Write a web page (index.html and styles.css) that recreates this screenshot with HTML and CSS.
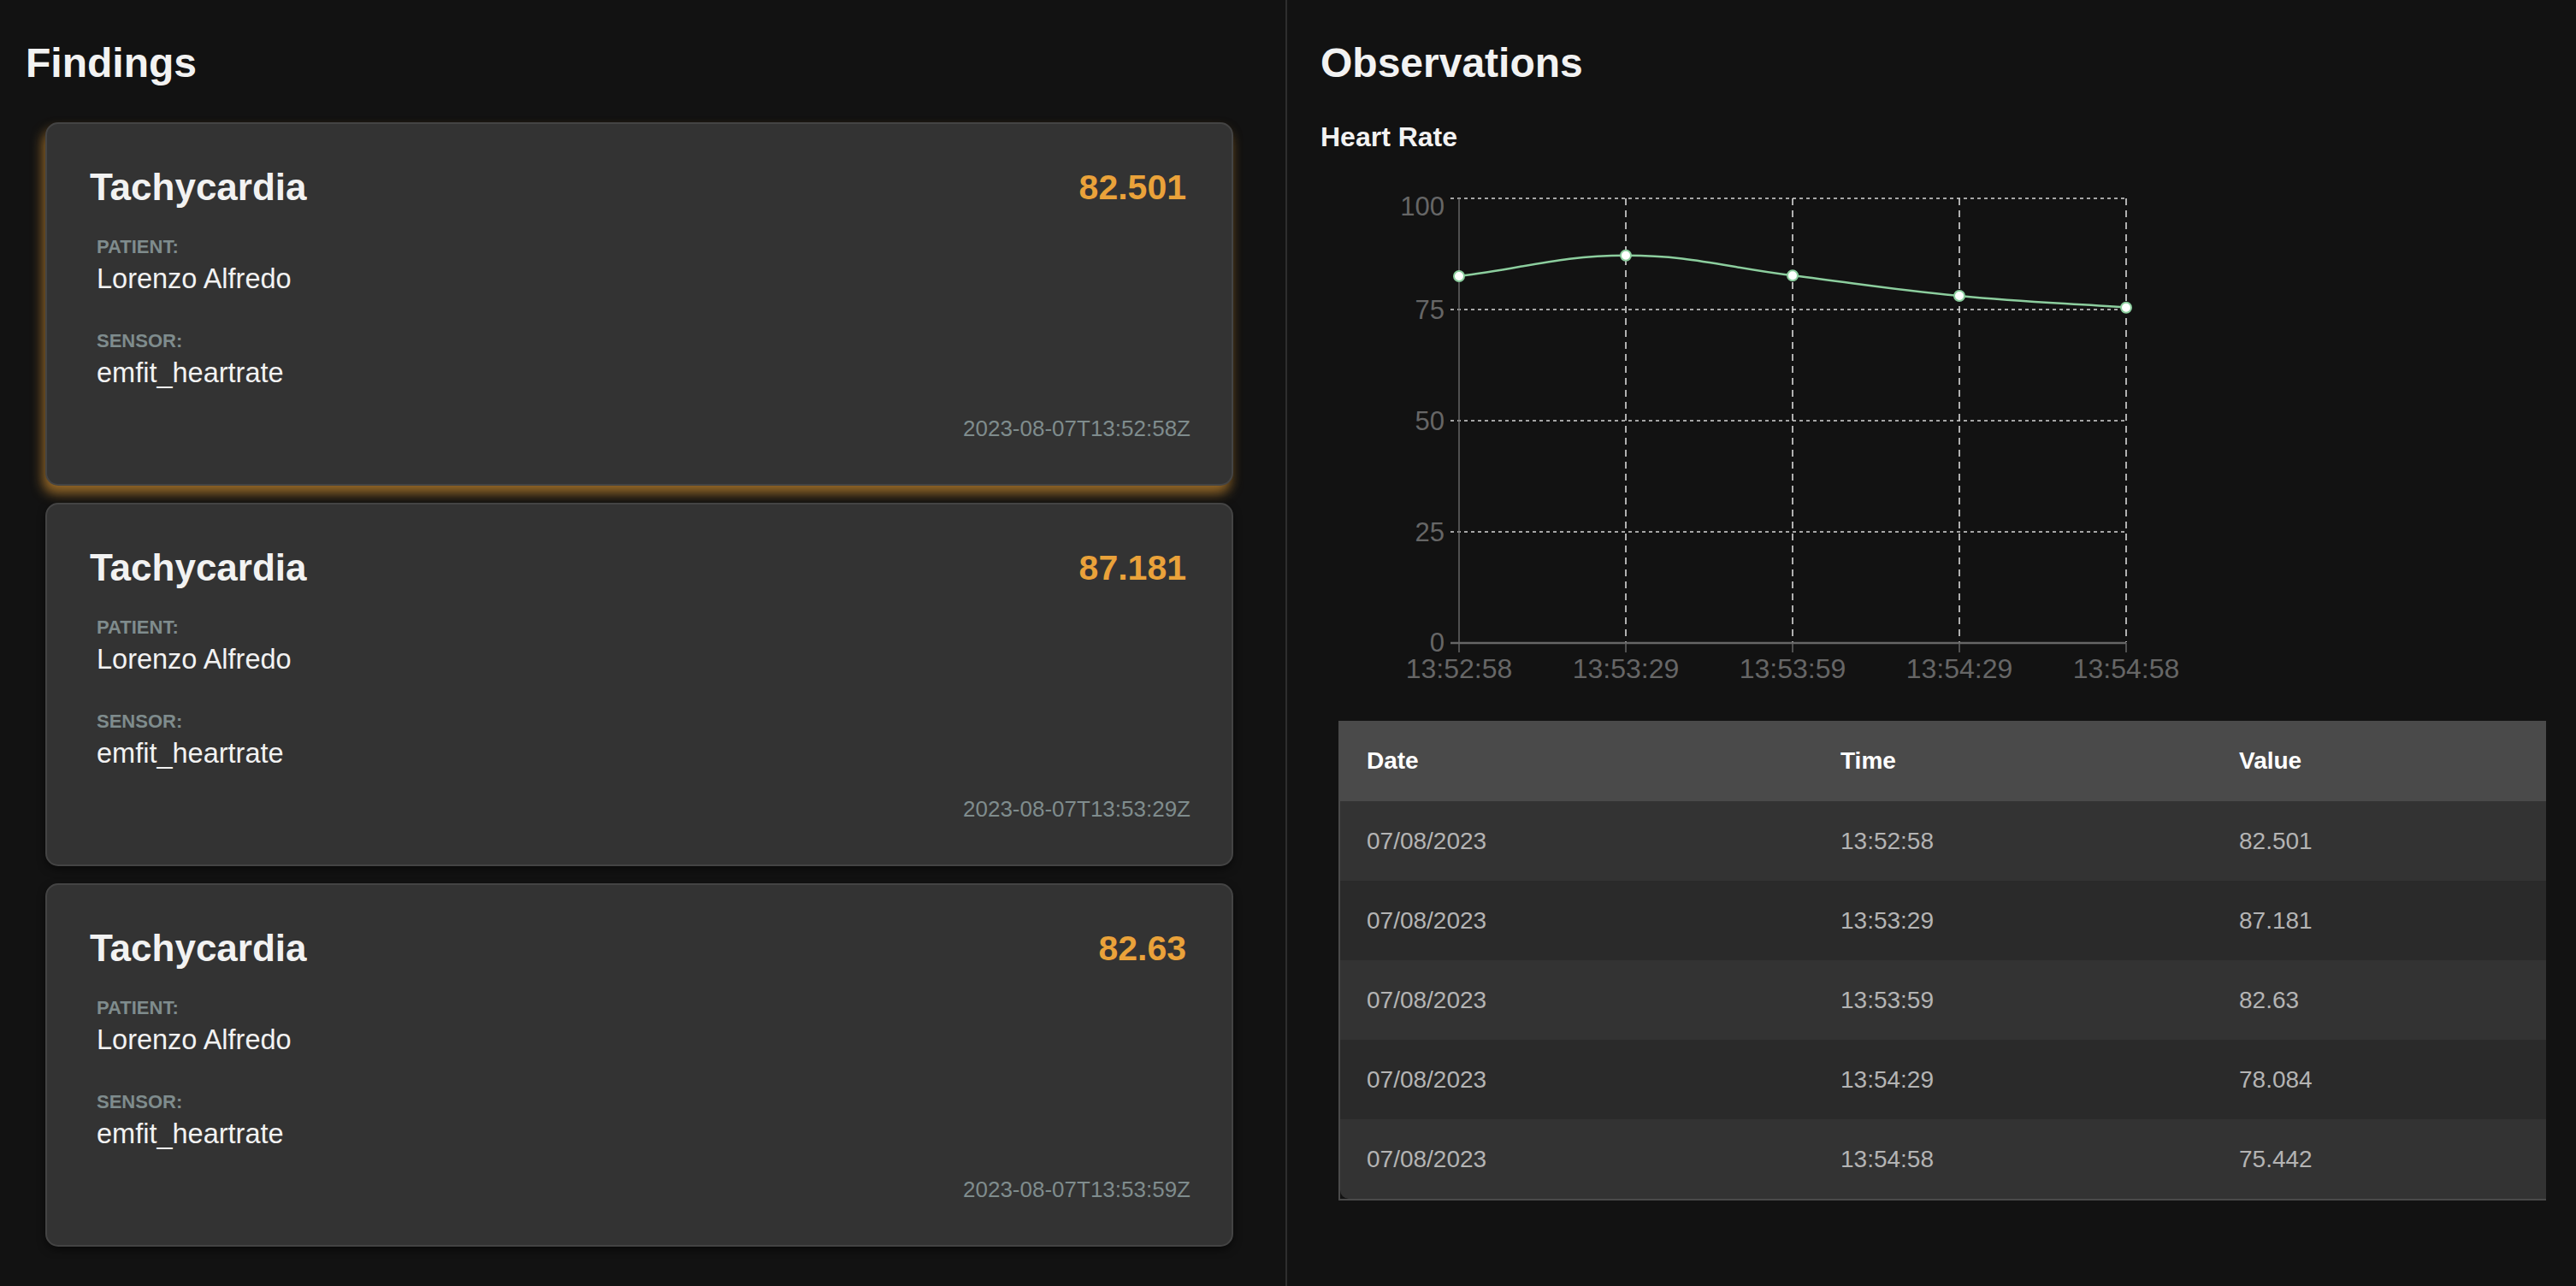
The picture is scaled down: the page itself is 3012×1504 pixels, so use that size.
FILE: index.html
```html
<!DOCTYPE html>
<html lang="en">
<head>
<meta charset="utf-8">
<title>Findings &amp; Observations</title>
<link rel="stylesheet" href="styles.css">
</head>
<body>
<div class="layout">
  <section class="panel panel-findings">
    <h1 class="panel-title">Findings</h1>
    <div class="card-list">
      <article class="card card-active">
        <div class="card-head">
          <h2 class="card-title">Tachycardia</h2>
          <span class="card-value">82.501</span>
        </div>
        <div class="card-info">
          <div class="info-label">Patient:</div>
          <div class="info-value">Lorenzo Alfredo</div>
          <div class="info-label info-label-next">Sensor:</div>
          <div class="info-value">emfit_heartrate</div>
        </div>
        <div class="card-time">2023-08-07T13:52:58Z</div>
      </article>
      <article class="card">
        <div class="card-head">
          <h2 class="card-title">Tachycardia</h2>
          <span class="card-value">87.181</span>
        </div>
        <div class="card-info">
          <div class="info-label">Patient:</div>
          <div class="info-value">Lorenzo Alfredo</div>
          <div class="info-label info-label-next">Sensor:</div>
          <div class="info-value">emfit_heartrate</div>
        </div>
        <div class="card-time">2023-08-07T13:53:29Z</div>
      </article>
      <article class="card">
        <div class="card-head">
          <h2 class="card-title">Tachycardia</h2>
          <span class="card-value">82.63</span>
        </div>
        <div class="card-info">
          <div class="info-label">Patient:</div>
          <div class="info-value">Lorenzo Alfredo</div>
          <div class="info-label info-label-next">Sensor:</div>
          <div class="info-value">emfit_heartrate</div>
        </div>
        <div class="card-time">2023-08-07T13:53:59Z</div>
      </article>
    </div>
  </section>

  <section class="panel panel-observations">
    <h1 class="panel-title">Observations</h1>
    <h3 class="chart-title">Heart Rate</h3>
    <div class="chart-wrap">
      <svg class="chart" width="960" height="600" viewBox="0 0 960 600" xmlns="http://www.w3.org/2000/svg">
        <g class="grid-h" stroke="#d8d8d8" stroke-width="1.6" stroke-dasharray="4 4" fill="none">
          <line x1="95" y1="22" x2="885" y2="22"/>
          <line x1="95" y1="152" x2="885" y2="152"/>
          <line x1="95" y1="282" x2="885" y2="282"/>
          <line x1="95" y1="412" x2="885" y2="412"/>
        </g>
        <g class="grid-v" stroke="#d8d8d8" stroke-width="1.6" stroke-dasharray="8 6" fill="none">
          <line x1="300" y1="22" x2="300" y2="541"/>
          <line x1="495" y1="22" x2="495" y2="541"/>
          <line x1="690" y1="22" x2="690" y2="541"/>
          <line x1="885" y1="22" x2="885" y2="541"/>
        </g>
        <g class="axes" stroke="#666" fill="none">
          <line x1="105" y1="22" x2="105" y2="553" stroke-width="1.5"/>
          <line x1="95" y1="542" x2="885" y2="542" stroke-width="2.5"/>
          <line x1="300" y1="542" x2="300" y2="553" stroke-width="1.5"/>
          <line x1="495" y1="542" x2="495" y2="553" stroke-width="1.5"/>
          <line x1="690" y1="542" x2="690" y2="553" stroke-width="1.5"/>
          <line x1="885" y1="542" x2="885" y2="553" stroke-width="1.5"/>
        </g>
        <g class="tick-labels" fill="#666" font-family="'Liberation Sans', Arial, sans-serif" font-size="31">
          <text x="88" y="42" text-anchor="end">100</text>
          <text x="88" y="163" text-anchor="end">75</text>
          <text x="88" y="293" text-anchor="end">50</text>
          <text x="88" y="423" text-anchor="end">25</text>
          <text x="88" y="552" text-anchor="end">0</text>
        </g>
        <g class="tick-labels" fill="#666" font-family="'Liberation Sans', Arial, sans-serif" font-size="32">
          <text x="105" y="583" text-anchor="middle">13:52:58</text>
          <text x="300" y="583" text-anchor="middle">13:53:29</text>
          <text x="495" y="583" text-anchor="middle">13:53:59</text>
          <text x="690" y="583" text-anchor="middle">13:54:29</text>
          <text x="885" y="583" text-anchor="middle">13:54:58</text>
        </g>
        <path d="M105,113 C183,103.3 222,88.8 300,88.7 C378,88.6 417,102.8 495,112.3 C573,121.8 612,128.5 690,136 C768,143.5 807,144.2 885,149.7" fill="none" stroke="#8cce9e" stroke-width="2.5"/>
        <g fill="#fff" stroke="#8cce9e" stroke-width="2">
          <circle cx="105" cy="113" r="6"/>
          <circle cx="300" cy="88.7" r="6"/>
          <circle cx="495" cy="112.3" r="6"/>
          <circle cx="690" cy="136" r="6"/>
          <circle cx="885" cy="149.7" r="6"/>
        </g>
      </svg>
    </div>
    <table class="obs-table">
      <thead>
        <tr>
          <th class="col-date">Date</th>
          <th class="col-time">Time</th>
          <th class="col-value">Value</th>
        </tr>
      </thead>
      <tbody>
        <tr><td>07/08/2023</td><td>13:52:58</td><td>82.501</td></tr>
        <tr><td>07/08/2023</td><td>13:53:29</td><td>87.181</td></tr>
        <tr><td>07/08/2023</td><td>13:53:59</td><td>82.63</td></tr>
        <tr><td>07/08/2023</td><td>13:54:29</td><td>78.084</td></tr>
        <tr><td>07/08/2023</td><td>13:54:58</td><td>75.442</td></tr>
      </tbody>
    </table>
  </section>
</div>
</body>
</html>
```

FILE: styles.css
```css
* {
  box-sizing: border-box;
}

html, body {
  margin: 0;
  padding: 0;
  background: #121212;
  color: #f2f2f2;
  font-family: "Liberation Sans", Arial, Helvetica, sans-serif;
}

.layout {
  display: flex;
  width: 3012px;
  height: 1504px;
  overflow: hidden;
}

.panel {
  padding-top: 46px;
}

.panel-findings {
  width: 1505px;
  flex: 0 0 1505px;
  padding-left: 30px;
  padding-right: 61px;
  border-right: 2px solid #2e2e2e;
}

.panel-observations {
  flex: 1 1 auto;
  padding-left: 39px;
  padding-right: 35px;
}

.panel-title {
  margin: 0;
  font-size: 48px;
  line-height: 56px;
  font-weight: bold;
  color: #f2f2f2;
}

.card-list {
  margin-top: 41px;
  margin-left: 23px;
  display: flex;
  flex-direction: column;
  gap: 20px;
}

.card {
  background: #333333;
  border: 2px solid #444444;
  border-radius: 15px;
  padding: 49px 48px 49px 50px;
  box-shadow: 0 4px 10px rgba(0, 0, 0, 0.5);
}

.card-active {
  box-shadow: -3px 9px 14px rgba(234, 162, 58, 0.62), 0 4px 10px rgba(0, 0, 0, 0.5);
}

.card-head {
  display: flex;
  justify-content: space-between;
  align-items: center;
  height: 50px;
}

.card-title {
  margin: 0;
  font-size: 44px;
  line-height: 50px;
  font-weight: bold;
  color: #f2f2f2;
}

.card-value {
  margin-right: 5px;
  font-size: 41px;
  line-height: 50px;
  font-weight: bold;
  color: #eaa23a;
}

.card-info {
  margin-top: 33px;
  padding-left: 8px;
}

.info-label {
  font-size: 22px;
  line-height: 24px;
  font-weight: bold;
  text-transform: uppercase;
  color: #7f8c8d;
}

.info-label-next {
  margin-top: 42px;
}

.info-value {
  margin-top: 7px;
  font-size: 32.5px;
  line-height: 37px;
  color: #f2f2f2;
}

.card-time {
  margin-top: 31px;
  text-align: right;
  font-size: 26px;
  line-height: 31px;
  color: #7f8c8d;
}

.chart-title {
  margin: 40px 0 0 0;
  font-size: 32px;
  line-height: 37px;
  font-weight: bold;
  color: #f2f2f2;
}

.chart-wrap {
  margin-top: 31px;
  margin-left: 57px;
  height: 600px;
}

.chart {
  display: block;
}

.obs-table {
  margin-top: 33px;
  margin-left: 21px;
  width: 1412px;
  border-collapse: separate;
  border-spacing: 0;
  border-left: 2px solid #4a4a4a;
  border-bottom: 2px solid #4a4a4a;
  font-size: 28px;
}

.obs-table th {
  background: #4a4a4a;
  color: #ffffff;
  font-weight: bold;
  text-align: left;
  padding: 31px 32px 31px 31px;
  line-height: 32px;
}

.col-date {
  width: 554px;
}

.col-time {
  width: 466px;
}

.obs-table td {
  padding: 30px 32px 30px 31px;
  line-height: 33px;
  color: #b4b4b4;
}

.obs-table tbody tr:nth-child(odd) td {
  background: #333333;
}

.obs-table tbody tr:nth-child(even) td {
  background: #2a2a2a;
}

.obs-table tbody tr:last-child td:first-child {
  border-bottom-left-radius: 10px;
}
```
